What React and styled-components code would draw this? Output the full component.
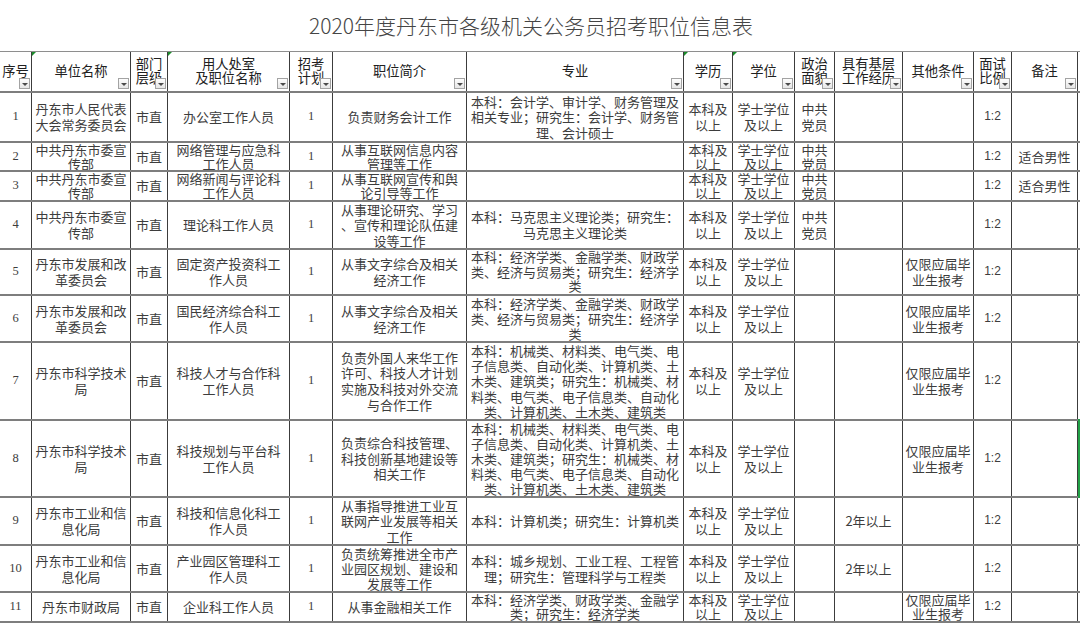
import React from "react";
import styled, { createGlobalStyle, css } from "styled-components";

const GlobalStyle = createGlobalStyle`
  html, body {
    margin: 0;
    padding: 0;
    background: #fff;
  }
  body {
    width: 1080px;
    height: 625px;
    overflow: hidden;
  }
`;

// column widths (px), last column ends at x = 1078
const COLS = [32, 99, 37, 122, 43, 134, 217, 49, 62, 40, 68, 71, 38, 66];
const LINE = 15.6;

const HEADERS = [
  { label: "序号" },
  { label: "单位名称", flag: true },
  { label: "部门\n层级" },
  { label: "用人处室\n及职位名称", flag: true },
  { label: "招考\n计划" },
  { label: "职位简介" },
  { label: "专业" },
  { label: "学历", flag: true },
  { label: "学位", flag: true },
  { label: "政治\n面貌" },
  { label: "具有基层\n工作经历" },
  { label: "其他条件" },
  { label: "面试\n比例" },
  { label: "备注" }
];

const XK = "本科及\n以上";
const XW = "学士学位\n及以上";
const DY = "中共\n党员";
const YJ = "仅限应届毕\n业生报考";
const JJ = "本科：经济学类、金融学类、财政学\n类、经济与贸易类；研究生：经济学\n类";
const KJ =
  "本科：机械类、材料类、电气类、电\n子信息类、自动化类、计算机类、土\n木类、建筑类；研究生：机械类、材\n料类、电气类、电子信息类、自动化\n类、计算机类、土木类、建筑类";

const ROWS = [
  {
    h: 50,
    cells: ["1", "丹东市人民代表\n大会常务委员会", "市直", "办公室工作人员", "1", "负责财务会计工作",
      "本科：会计学、审计学、财务管理及\n相关专业；研究生：会计学、财务管\n理、会计硕士", XK, XW, DY, "", "", "1:2", ""]
  },
  {
    h: 29,
    cells: ["2", "中共丹东市委宣\n传部", "市直", "网络管理与应急科\n工作人员", "1", "从事互联网信息内容\n管理等工作",
      "", XK, XW, DY, "", "", "1:2", "适合男性"]
  },
  {
    h: 30,
    cells: ["3", "中共丹东市委宣\n传部", "市直", "网络新闻与评论科\n工作人员", "1", "从事互联网宣传和舆\n论引导等工作",
      "", XK, XW, DY, "", "", "1:2", "适合男性"]
  },
  {
    h: 48,
    cells: ["4", "中共丹东市委宣\n传部", "市直", "理论科工作人员", "1", "从事理论研究、学习\n、宣传和理论队伍建\n设等工作",
      "本科：马克思主义理论类；研究生：\n马克思主义理论类", XK, XW, DY, "", "", "1:2", ""]
  },
  {
    h: 46,
    cells: ["5", "丹东市发展和改\n革委员会", "市直", "固定资产投资科工\n作人员", "1", "从事文字综合及相关\n经济工作",
      JJ, XK, XW, "", "", YJ, "1:2", ""]
  },
  {
    h: 47,
    cells: ["6", "丹东市发展和改\n革委员会", "市直", "国民经济综合科工\n作人员", "1", "从事文字综合及相关\n经济工作",
      JJ, XK, XW, "", "", YJ, "1:2", ""]
  },
  {
    h: 78,
    cells: ["7", "丹东市科学技术\n局", "市直", "科技人才与合作科\n工作人员", "1",
      "负责外国人来华工作\n许可、科技人才计划\n实施及科技对外交流\n与合作工作", KJ, XK, XW, "", "", YJ, "1:2", ""]
  },
  {
    h: 77,
    marked: true,
    cells: ["8", "丹东市科学技术\n局", "市直", "科技规划与平台科\n工作人员", "1",
      "负责综合科技管理、\n科技创新基地建设等\n相关工作", KJ, XK, XW, "", "", YJ, "1:2", ""]
  },
  {
    h: 48,
    cells: ["9", "丹东市工业和信\n息化局", "市直", "科技和信息化科工\n作人员", "1", "从事指导推进工业互\n联网产业发展等相关\n工作",
      "本科：计算机类；研究生：计算机类", XK, XW, "", "2年以上", "", "1:2", ""]
  },
  {
    h: 47,
    cells: ["10", "丹东市工业和信\n息化局", "市直", "产业园区管理科工\n作人员", "1", "负责统筹推进全市产\n业园区规划、建设和\n发展等工作",
      "本科：城乡规划、工业工程、工程管\n理；研究生：管理科学与工程类", XK, XW, "", "2年以上", "", "1:2", ""]
  },
  {
    h: 30,
    cells: ["11", "丹东市财政局", "市直", "企业科工作人员", "1", "从事金融相关工作",
      "本科：经济学类、财政学类、金融学\n类；研究生：经济学类", XK, XW, "", "", YJ, "1:2", ""]
  }
];

const Page = styled.div`
  width: 1080px;
  height: 625px;
  overflow: hidden;
  background: #fff;
  font-family: "Noto Sans CJK SC", "Noto Sans", sans-serif;
  color: #333;
`;

const Title = styled.h1`
  margin: 0;
  height: 51px;
  box-sizing: border-box;
  padding: 0 18px 2px 0;
  display: flex;
  align-items: center;
  justify-content: center;
  font-size: 21px;
  font-weight: 300;
  color: #454545;
`;

const Sheet = styled.div`
  width: 1080px;
`;

const Row = styled.div`
  position: relative;
  display: grid;
  grid-template-columns: ${COLS.map(c => c + "px").join(" ")} 2px;
  height: ${p => p.$h}px;
  box-sizing: border-box;
  border-bottom: 2px solid #7e7e7e;
  ${p =>
    p.$head &&
    css`
      border-top: 1px solid #8e8e8e;
    `}
  ${p =>
    p.$marked &&
    css`
      &::after {
        content: "";
        position: absolute;
        right: 0;
        top: -2px;
        bottom: -2px;
        width: 2px;
        background: #22a046;
      }
    `}
`;

const Cell = styled.div`
  box-sizing: border-box;
  border-right: 1px solid #3c3c3c;
  display: flex;
  align-items: safe center;
  justify-content: safe center;
  text-align: center;
  white-space: pre;
  overflow: hidden;
  font-size: 13px;
  line-height: ${p => p.$lh || LINE}px;
  color: #3d3d3d;
  ${p =>
    p.$kind === "num" &&
    css`
      font-family: "Liberation Serif", serif;
      font-size: 12.5px;
    `}
  ${p =>
    p.$kind === "ratio" &&
    css`
      font-family: "Liberation Sans", sans-serif;
      font-size: 12px;
    `}
`;

const HeadCell = styled(Cell)`
  position: relative;
  align-items: center;
  line-height: 14.5px;
  font-size: 13.3px;
  color: #202020;
  padding-bottom: 1px;
  ${p =>
    p.$flag &&
    css`
      &::before {
        content: "";
        position: absolute;
        left: 0;
        top: 0;
        border-top: 4px solid #1c8c2c;
        border-right: 4px solid transparent;
      }
    `}
`;

const FilterButton = styled.span`
  position: absolute;
  right: 1px;
  bottom: 2px;
  width: 11px;
  height: 11px;
  box-sizing: border-box;
  border: 1px solid #a3a3a3;
  background: linear-gradient(#fdfdfd, #e6e6e6);
  display: flex;
  align-items: center;
  justify-content: center;

  &::after {
    content: "";
    margin-top: 1px;
    border-left: 3px solid transparent;
    border-right: 3px solid transparent;
    border-top: 3px solid #4a4a4a;
  }
`;

const kindOf = i => (i === 0 || i === 4 ? "num" : i === 12 ? "ratio" : undefined);

// squeeze the line height a little when a cell holds more lines than fit
const lineHeightFor = (text, rowHeight) => {
  const lines = text.split("\n").length;
  return Math.min(LINE, Math.floor(((rowHeight - 2) / lines) * 10) / 10);
};

export default function App() {
  return (
    <Page>
      <GlobalStyle />
      <Title>2020年度丹东市各级机关公务员招考职位信息表</Title>
      <Sheet>
        <Row $head $h={42}>
          {HEADERS.map(col => (
            <HeadCell key={col.label} $flag={col.flag}>
              {col.label}
              <FilterButton />
            </HeadCell>
          ))}
        </Row>
        {ROWS.map((row, r) => (
          <Row key={r} $h={row.h} $marked={row.marked}>
            {row.cells.map((text, i) => (
              <Cell key={i} $kind={kindOf(i)} $lh={lineHeightFor(text, row.h)}>
                {text}
              </Cell>
            ))}
          </Row>
        ))}
      </Sheet>
    </Page>
  );
}
